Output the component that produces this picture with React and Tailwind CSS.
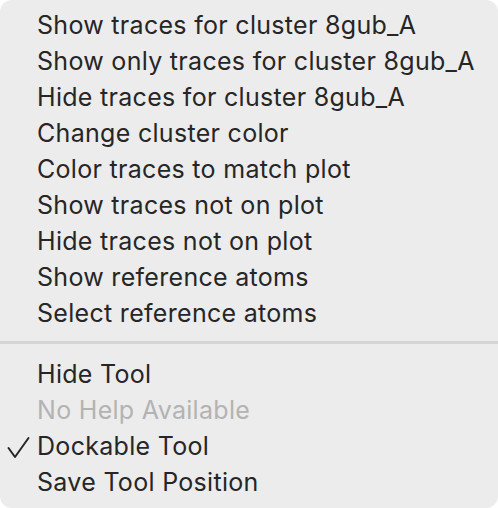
const groupA = [
  "Show traces for cluster 8gub_A",
  "Show only traces for cluster 8gub_A",
  "Hide traces for cluster 8gub_A",
  "Change cluster color",
  "Color traces to match plot",
  "Show traces not on plot",
  "Hide traces not on plot",
  "Show reference atoms",
  "Select reference atoms",
];

const groupB = [
  { label: "Hide Tool" },
  { label: "No Help Available", disabled: true },
  { label: "Dockable Tool", checked: true },
  { label: "Save Tool Position" },
];

function Item({ label, disabled, checked }) {
  return (
    <div className="relative h-[36px] flex items-center pl-[37px] pt-[3px]">
      {checked && (
        <svg
          className="absolute left-[6px] top-[9px]"
          width="24"
          height="24"
          viewBox="0 0 24 24"
          fill="none"
        >
          <path
            d="M2.5 12 L9 21 L22.5 2"
            stroke="#262626"
            strokeWidth="2"
            strokeLinecap="round"
            strokeLinejoin="round"
          />
        </svg>
      )}
      <span className={disabled ? "text-[#b3b3b3]" : "text-[#262626]"}>
        {label}
      </span>
    </div>
  );
}

export default function App() {
  return (
    <div className="w-[498px] h-[508px] bg-white">
      <div
        className="w-[498px] h-[508px] bg-[#ececec] rounded-[12px] pt-[6px] text-[25px] tracking-[0.3px] leading-none"
        style={{ fontFamily: "Inter, 'Noto Sans', sans-serif" }}
      >
        {groupA.map((l) => (
          <Item key={l} label={l} />
        ))}
        <div className="h-[25px] flex items-center">
          <div className="w-full h-[3px] bg-[#d5d5d5]" />
        </div>
        {groupB.map((i) => (
          <Item key={i.label} {...i} />
        ))}
      </div>
    </div>
  );
}
